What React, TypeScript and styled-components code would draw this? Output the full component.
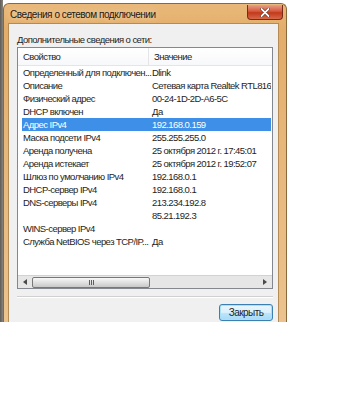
import React from 'react'
import styled, { createGlobalStyle } from 'styled-components'

const GlobalStyle = createGlobalStyle`
  html, body {
    margin: 0;
    padding: 0;
    background: #ffffff;
  }
  body {
    font-family: 'Liberation Sans', Arial, sans-serif;
    font-size: 9.5px;
    letter-spacing: -0.55px;
    color: #1e1e1e;
  }
`

const S = {
  Desktop: styled.div`
    display: flex;
    align-items: flex-start;
    width: 346px;
    height: 400px;
    background: #ffffff;
  `,

  Strip: styled.div`
    width: 3px;
    height: 322px;
    background: linear-gradient(90deg, #5d5a56, #8a847c);
  `,

  Window: styled.div`
    margin-top: 3px;
    width: 284px;
    height: 319px;
    display: flex;
    flex-direction: column;
    border: 1px solid #8a6a3c;
    border-bottom: none;
    border-radius: 6px 6px 0 0;
    background: linear-gradient(180deg, #e9b97a 0%, #e3ad6a 8%, #e6b679 40%, #ebc38e 100%);
    box-sizing: border-box;
    padding: 0 7px 0 4px;
  `,

  TitleBar: styled.div`
    height: 19px;
    flex: none;
    display: flex;
    align-items: flex-start;
    justify-content: space-between;
  `,

  Title: styled.div`
    padding: 5px 0 0 2px;
    font-size: 10px;
    letter-spacing: -0.45px;
    color: #1a1a1a;
    text-shadow: 0 0 6px rgba(255, 240, 220, 0.9);
  `,

  CloseButton: styled.div`
    width: 36px;
    height: 15px;
    margin: 1px -4px 0 0;
    border: 1px solid #7a2a1a;
    border-top: none;
    border-radius: 0 0 4px 4px;
    background: linear-gradient(180deg, #e7a08a 0%, #d5573c 45%, #c23a1c 55%, #d8684a 100%);
    display: flex;
    align-items: center;
    justify-content: center;
    box-sizing: border-box;
  `,

  Client: styled.div`
    flex: 1;
    display: flex;
    flex-direction: column;
    background: #f0f0f0;
    border: 1px solid #b48a55;
    border-bottom: none;
    padding: 9px 5px 0 8px;
  `,

  Caption: styled.div`
    height: 14px;
    flex: none;
    line-height: 14px;
    color: #1e1e1e;
  `,

  ListBox: styled.div`
    width: 256px;
    height: 242px;
    flex: none;
    box-sizing: border-box;
    border: 1px solid #828790;
    background: #ffffff;
    display: flex;
    flex-direction: column;
    overflow: hidden;
  `,

  Header: styled.div`
    height: 17px;
    flex: none;
    display: flex;
    border-bottom: 1px solid #e5e5e5;
    background: linear-gradient(180deg, #ffffff, #f7f8fa);
  `,

  HeaderCell: styled.div<{ $w: number }>`
    width: ${p => p.$w}px;
    flex-shrink: 0;
    padding-left: 5px;
    line-height: 17px;
    box-sizing: border-box;
    border-right: 1px solid #e5e5e5;
    white-space: nowrap;
  `,

  Rows: styled.div`
    flex: 1 1 auto;
    min-height: 0;
    overflow: hidden;
    padding: 0 1px 0 4px;
  `,

  Row: styled.div<{ $sel?: boolean }>`
    height: 13px;
    line-height: 13px;
    display: flex;
    background: ${p => (p.$sel ? '#3d8fe8' : 'transparent')};
    color: ${p => (p.$sel ? '#ffffff' : '#1e1e1e')};
    white-space: nowrap;
    overflow: hidden;
  `,

  Key: styled.div`
    width: 130px;
    flex: none;
    padding-left: 1px;
    box-sizing: border-box;
    overflow: hidden;
    white-space: nowrap;
  `,

  Value: styled.div`
    flex: none;
    white-space: nowrap;
  `,

  ScrollBar: styled.div`
    height: 12px;
    flex: none;
    margin-top: auto;
    display: flex;
    align-items: center;
    background: #e6e6e6;
    border-top: 1px solid #d2d2d2;
  `,

  Arrow: styled.div`
    width: 14px;
    height: 100%;
    display: flex;
    align-items: center;
    justify-content: center;
  `,

  Track: styled.div`
    flex: 1;
    height: 100%;
    display: flex;
    align-items: center;
  `,

  Thumb: styled.div`
    width: 118px;
    height: 11px;
    border: 1px solid #777878;
    border-radius: 2px;
    background: linear-gradient(180deg, #f8f8f8, #e0e0e0 50%, #c8c8c8);
    display: flex;
    align-items: center;
    justify-content: center;
    box-sizing: border-box;
  `,

  Grip: styled.div`
    width: 5px;
    height: 5px;
    background: repeating-linear-gradient(90deg, #5e5e5e 0 1px, transparent 1px 2px);
  `,

  Separator: styled.div`
    width: 256px;
    height: 0;
    flex: none;
    margin-top: 7px;
    border-top: 1px solid #d0d0d0;
    border-bottom: 1px solid #ffffff;
  `,

  Footer: styled.div`
    width: 256px;
    display: flex;
    justify-content: flex-end;
    padding-top: 6px;
  `,

  Button: styled.div`
    width: 54px;
    height: 17px;
    box-sizing: border-box;
    border: 1px solid #3c7fb1;
    border-radius: 3px;
    box-shadow: inset 0 0 0 1px #a8e0f8;
    background: linear-gradient(180deg, #eaf6fd 0%, #d9f0fc 50%, #bee6fd 51%, #a7d9f5 100%);
    display: flex;
    align-items: center;
    justify-content: center;
    font-size: 10px;
    color: #1e1e1e;
  `
}

const rows: [string, string][] = [
  ['Определенный для подключен...', 'Dlink'],
  ['Описание', 'Сетевая карта Realtek RTL8168C(P)/8111C(P)'],
  ['Физический адрес', '00-24-1D-2D-A6-5C'],
  ['DHCP включен', 'Да'],
  ['Адрес IPv4', '192.168.0.159'],
  ['Маска подсети IPv4', '255.255.255.0'],
  ['Аренда получена', '25 октября 2012 г. 17:45:01'],
  ['Аренда истекает', '25 октября 2012 г. 19:52:07'],
  ['Шлюз по умолчанию IPv4', '192.168.0.1'],
  ['DHCP-сервер IPv4', '192.168.0.1'],
  ['DNS-серверы IPv4', '213.234.192.8'],
  ['', '85.21.192.3'],
  ['WINS-сервер IPv4', ''],
  ['Служба NetBIOS через TCP/IP...', 'Да'],
]

const App = () => {
  return (
    <S.Desktop>
      <GlobalStyle />
      <S.Strip />
      <S.Window>
        <S.TitleBar>
          <S.Title>Сведения о сетевом подключении</S.Title>
          <S.CloseButton>
            <svg width="10" height="9" viewBox="0 0 10 9">
              <path d="M1.5 1 L8.5 8 M8.5 1 L1.5 8" stroke="#5a1a0a" strokeWidth="3" strokeLinecap="round" />
              <path d="M1.5 1 L8.5 8 M8.5 1 L1.5 8" stroke="#ffffff" strokeWidth="1.8" strokeLinecap="round" />
            </svg>
          </S.CloseButton>
        </S.TitleBar>
        <S.Client>
          <S.Caption>Дополнительные сведения о сети:</S.Caption>
          <S.ListBox>
            <S.Header>
              <S.HeaderCell $w={131}>Свойство</S.HeaderCell>
              <S.HeaderCell $w={140}>Значение</S.HeaderCell>
            </S.Header>
            <S.Rows>
              {rows.map(([k, v], i) => (
                <S.Row key={i} $sel={i === 4}>
                  <S.Key>{k}</S.Key>
                  <S.Value>{v}</S.Value>
                </S.Row>
              ))}
            </S.Rows>
            <S.ScrollBar>
              <S.Arrow>
                <svg width="4" height="6" viewBox="0 0 4 6">
                  <path d="M4 0 L0 3 L4 6 Z" fill="#4a4a4a" />
                </svg>
              </S.Arrow>
              <S.Track>
                <S.Thumb>
                  <S.Grip />
                </S.Thumb>
              </S.Track>
              <S.Arrow>
                <svg width="4" height="6" viewBox="0 0 4 6">
                  <path d="M0 0 L4 3 L0 6 Z" fill="#4a4a4a" />
                </svg>
              </S.Arrow>
            </S.ScrollBar>
          </S.ListBox>
          <S.Separator />
          <S.Footer>
            <S.Button>Закрыть</S.Button>
          </S.Footer>
        </S.Client>
      </S.Window>
    </S.Desktop>
  )
}

export default App
